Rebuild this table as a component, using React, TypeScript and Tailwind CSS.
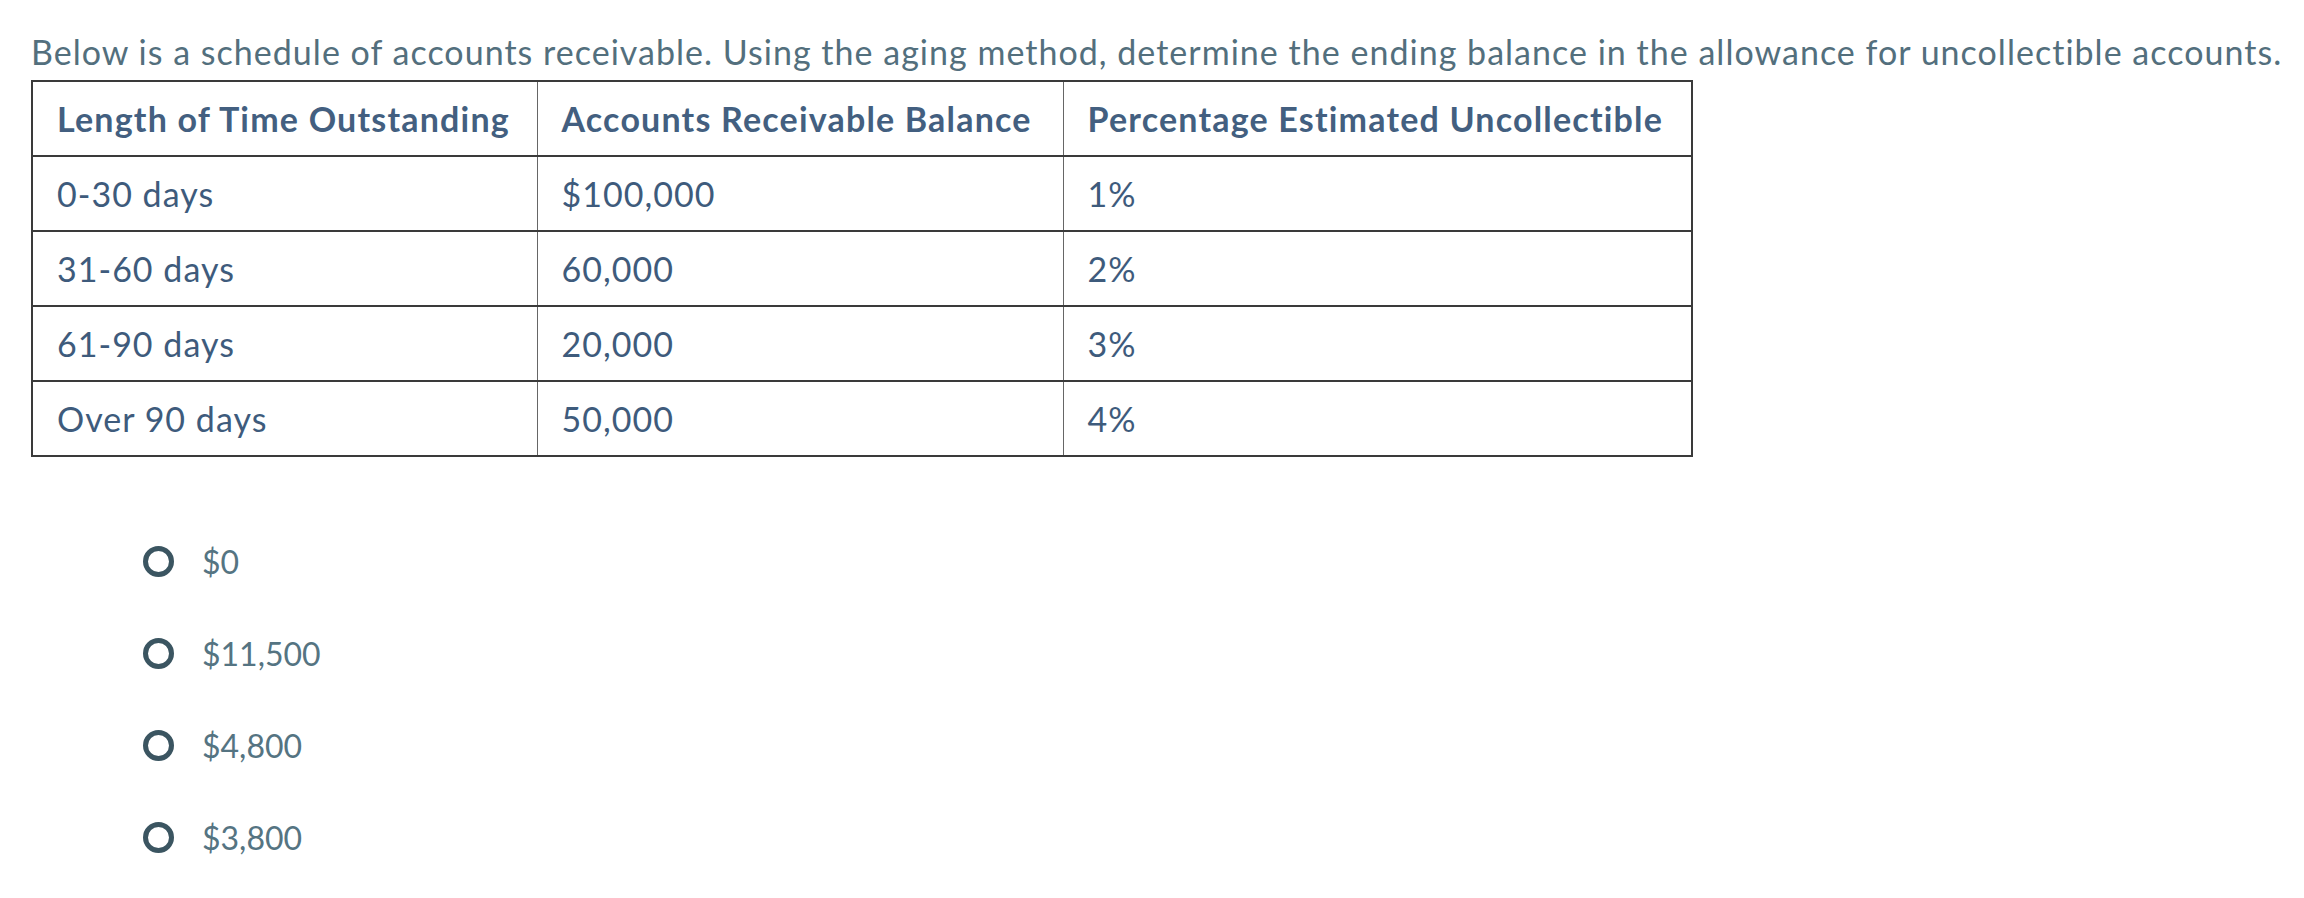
import React from "react";

const rows = [
  { time: "0-30 days", balance: "$100,000", pct: "1%" },
  { time: "31-60 days", balance: "60,000", pct: "2%" },
  { time: "61-90 days", balance: "20,000", pct: "3%" },
  { time: "Over 90 days", balance: "50,000", pct: "4%" },
];

const choices = ["$0", "$11,500", "$4,800", "$3,800"];

const App = () => {
  return (
    <div className="min-h-screen bg-white pl-[31px] pt-[32px] font-['Lato','Liberation_Sans',sans-serif]">
      <p className="whitespace-nowrap text-[34px] leading-[40px] tracking-[0.03em] text-[#536f7d]">
        Below is a schedule of accounts receivable. Using the aging method, determine the ending balance in the allowance for uncollectible accounts.
      </p>
      <table className="mt-[8px] border-collapse border-2 border-[#3a3a3a] text-[34px] tracking-[0.03em] text-[#3e5b7c]">
        <thead>
          <tr className="h-[75px] border-b-2 border-[#3a3a3a]">
            <th className="w-[505px] border-r border-[#666] pl-[24px] text-left font-bold tracking-[0.035em] text-[#435f80]">
              Length of Time Outstanding
            </th>
            <th className="w-[526px] border-r border-[#666] pl-[24px] text-left font-bold tracking-[0.035em] text-[#435f80]">
              Accounts Receivable Balance
            </th>
            <th className="w-[629px] pl-[24px] text-left font-bold tracking-[0.035em] text-[#435f80]">
              Percentage Estimated Uncollectible
            </th>
          </tr>
        </thead>
        <tbody>
          {rows.map((r) => (
            <tr key={r.time} className="h-[75px] border-b-2 border-[#3a3a3a]">
              <td className="border-r border-[#666] pl-[24px]">{r.time}</td>
              <td className="border-r border-[#666] pl-[24px]">{r.balance}</td>
              <td className="pl-[24px]">{r.pct}</td>
            </tr>
          ))}
        </tbody>
      </table>
      <div className="mt-[89px] flex flex-col gap-[61px] pl-[112px]">
        {choices.map((c) => (
          <label key={c} className="flex items-center gap-[28px] text-[32px] leading-[31px] text-[#557482]">
            <span className="h-[31px] w-[31px] shrink-0 rounded-full border-[5px] border-[#3b5561]" />
            <span>{c}</span>
          </label>
        ))}
      </div>
    </div>
  );
};

export default App;
